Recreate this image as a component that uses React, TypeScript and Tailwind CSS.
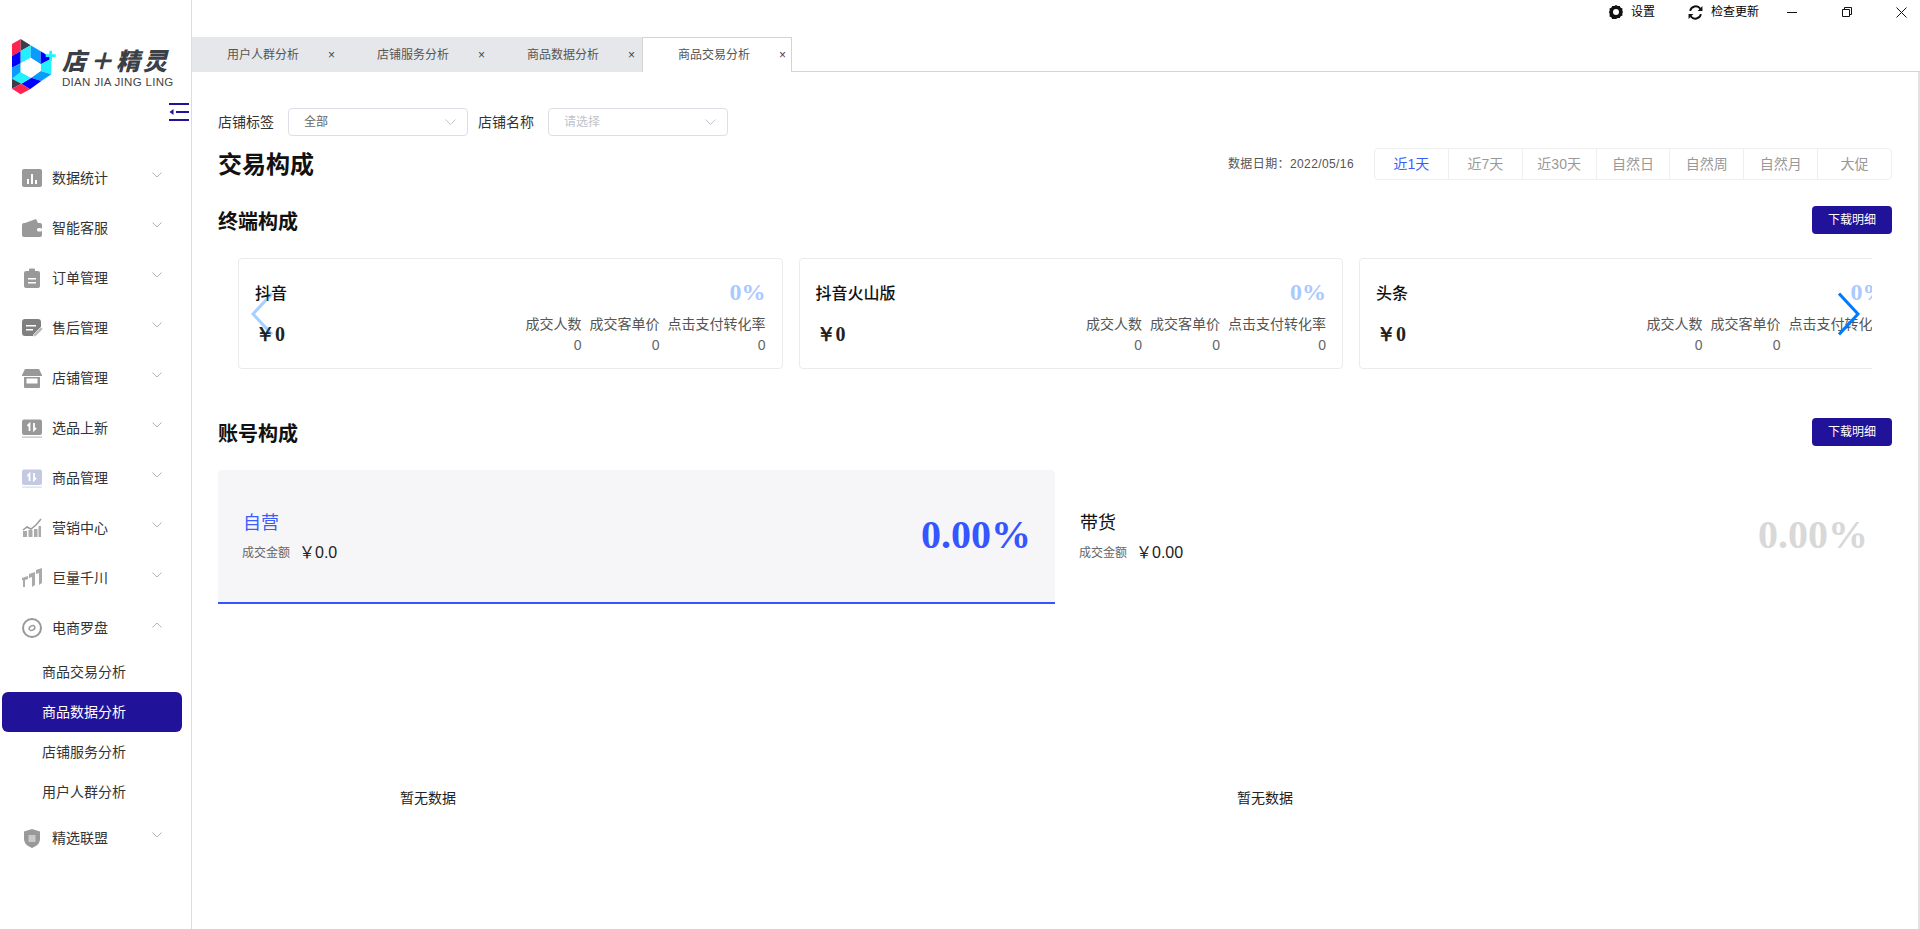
import { ReactNode } from 'react'

const NAVY = '#201399'

function Chevron({ up }: { up?: boolean }) {
    return (
        <svg width="10" height="6" viewBox="0 0 10 6" fill="none" stroke="#b4b4b8" strokeWidth="1" className="mt-[-6px]">
            <path d={up ? 'M0.5 5.5 L5 1 L9.5 5.5' : 'M0.5 0.5 L5 5 L9.5 0.5'} />
        </svg>
    )
}

const icons: Record<string, ReactNode> = {
    stats: (
        <>
            <rect x="0" y="1" width="20" height="18" rx="2" fill="#999" />
            <path d="M5 11h2v5H5zM9 6h2v10H9zM13 12h2v4h-2z" fill="#fff" />
        </>
    ),
    wallet: (
        <>
            <path d="M3 5 L14 1 L16 5z" fill="#999" />
            <rect x="0" y="5" width="20" height="14" rx="2" fill="#999" />
            <rect x="15" y="10" width="5" height="3.5" rx="1.5" fill="#fff" />
        </>
    ),
    clip: (
        <>
            <rect x="2" y="3" width="16" height="17" rx="2" fill="#999" />
            <rect x="7" y="0.5" width="6" height="4" rx="1" fill="#999" />
            <path d="M6 10h8v1.6H6zM6 14h8v1.6H6z" fill="#fff" />
        </>
    ),
    note: (
        <>
            <path d="M3 1h13a3 3 0 0 1 3 3v6l-8 8H3a3 3 0 0 1-3-3V4a3 3 0 0 1 3-3z" fill="#808080" />
            <path d="M4 7h10v1.6H4zM4 11h7v1.6H4z" fill="#fff" />
            <path d="M11 19l1-3 7-7 2 2-7 7z" fill="#bbb" stroke="#fff" strokeWidth="0.6" />
        </>
    ),
    store: (
        <>
            <path d="M3 1h14l3 6v1H0V7z" fill="#999" />
            <path d="M2 9h16v10a1 1 0 0 1-1 1H3a1 1 0 0 1-1-1z" fill="#999" />
            <path d="M4.500 10.500h11v5h-11z" fill="#fff" />
        </>
    ),
    swap: (
        <>
            <rect x="0" y="1.500" width="20" height="15.500" rx="2" fill="#999" />
            <rect x="0" y="18.500" width="20" height="1.200" fill="#bbb" />
            <path d="M7.500 13V6L5.500 8M12 5v7l2-2" stroke="#fff" strokeWidth="1.800" fill="none" />
        </>
    ),
    swapLight: (
        <>
            <rect x="0" y="1.500" width="20" height="15.500" rx="2" fill="#c4c9e2" />
            <rect x="0" y="18.500" width="20" height="1.200" fill="#d6daec" />
            <path d="M7.500 13V6L5.500 8M12 5v7l2-2" stroke="#fff" strokeWidth="1.800" fill="none" />
        </>
    ),
    chart: (
        <>
            <path d="M1 12l4-3 4 2 5-4 5-6" stroke="#999" strokeWidth="1.500" fill="none" />
            <path d="M1 13h4v6H1zM6.500 12h4v7h-4zM12 11h3.500v8H12zM16.500 8H19v11h-2.500z" fill="#aaa" />
        </>
    ),
    steps: (
        <>
            <path d="M0 10l6-2v3l-3 1v7H1v-7l-1 .3z" fill="#aaa" />
            <path d="M7 6l6-2v13l-3 2V9l-3 1z" fill="#aaa" />
            <path d="M14 2l6-2v15l-3 2V5l-3 1z" fill="#aaa" />
        </>
    ),
    compass: (
        <>
            <circle cx="10" cy="10" r="9" fill="none" stroke="#999" strokeWidth="2" />
            <ellipse cx="10" cy="10" rx="3" ry="2.200" fill="none" stroke="#999" strokeWidth="1.400" transform="rotate(-30 10 10)" />
        </>
    ),
    shield: (
        <>
            <path d="M10 1l8 2.500V11c0 4.500-4 7.500-8 9-4-1.500-8-4.500-8-9V3.500z" fill="#999" />
            <rect x="6.500" y="7" width="7" height="7" fill="#c9c9c9" />
        </>
    ),
}

function MenuRow({ icon, label, up }: { icon: string; label: string; up?: boolean }) {
    return (
        <div className="flex h-[50px] items-center pl-[22px]">
            <svg width="20" height="20" viewBox="0 0 20 20" className="shrink-0 overflow-visible">
                {icons[icon]}
            </svg>
            <span className="ml-[10px] w-[100px] text-[14px] text-[#333]">{label}</span>
            <Chevron up={up} />
        </div>
    )
}

function Logo() {
    return (
        <div className="flex h-[103px] items-start pl-[8px] pt-[36px]">
            <svg width="49" height="62" viewBox="0 0 147 186" className="shrink-0">
                <path d="M12 24 L38 9 L38 45 L12 60z" fill="#ff2450" />
                <path d="M38 9 L68 28 L38 45z" fill="#3a3f4b" />
                <path d="M12 60 L38 45 L38 82 L12 95z" fill="#0000ff" />
                <path d="M38 45 L68 28 L68 65 L38 82z" fill="#22f0ff" />
                <path d="M68 28 L98 46 L98 85 L68 65z" fill="#0a9bff" />
                <path d="M98 46 L130 65 L130 68 L98 85z" fill="#0000ff" />
                <path d="M98 85 L130 68 L130 115 L98 105z" fill="#22f0ff" />
                <path d="M70 125 L98 105 L130 115 L100 135z" fill="#0a9bff" />
                <path d="M40 143 L70 125 L100 135 L66 160z" fill="#0000ff" />
                <path d="M12 128 L38 108 L70 125 L40 143z" fill="#22f0ff" />
                <path d="M12 95 L38 82 L38 108 L12 128z" fill="#0a9bff" />
                <path d="M12 128 L40 143 L12 158z" fill="#3a3f4b" />
                <path d="M12 158 L40 143 L66 160 L38 175z" fill="#ff2450" />
                <path d="M68 65 L98 85 L98 105 L68 125 L38 108 L38 82z" fill="#fff" />
                <path d="M124 44h8v11h11v8h-11v11h-8V63h-11v-8h11z" fill="#22f0ff" />
            </svg>
            <div className="ml-[5px] flex flex-col">
                <span className="mt-[13px] h-[26px] whitespace-nowrap text-[24px] font-black italic leading-[26px] tracking-[3px] text-[#3a3f48]">店＋精灵</span>
                <span className="whitespace-nowrap text-[11.5px] leading-[14px] tracking-[0.3px] text-[#444]">DIAN JIA JING LING</span>
            </div>
        </div>
    )
}

function Sidebar() {
    const top = [
        ['stats', '数据统计'],
        ['wallet', '智能客服'],
        ['clip', '订单管理'],
        ['note', '售后管理'],
        ['store', '店铺管理'],
        ['swap', '选品上新'],
        ['swapLight', '商品管理'],
        ['chart', '营销中心'],
        ['steps', '巨量千川'],
    ]
    const subs = ['商品交易分析', '商品数据分析', '店铺服务分析', '用户人群分析']
    return (
        <aside className="flex h-[929px] w-[192px] shrink-0 flex-col border-r border-[#dcdcdc] bg-white">
            <Logo />
            <div className="flex h-[50px] items-start justify-end pr-[2px]">
                <svg width="20" height="18" viewBox="0 0 20 18" fill={NAVY}>
                    <rect x="0" y="0" width="20" height="2" />
                    <rect x="7" y="8" width="13" height="2" />
                    <rect x="0" y="16" width="20" height="2" />
                    <path d="M0.500 9 L4.500 6 V12z" />
                </svg>
            </div>
            {top.map(([icon, label]) => (
                <MenuRow key={label} icon={icon} label={label} />
            ))}
            <MenuRow icon="compass" label="电商罗盘" up />
            <div className="-mt-px flex flex-col">
                {subs.map((s, i) => (
                    <div
                        key={s}
                        className={`ml-[2px] flex h-[40px] w-[180px] items-center rounded-[6px] pl-[40px] text-[14px] ${i === 1 ? 'bg-[#201399] text-white' : 'text-[#333]'}`}
                    >
                        {s}
                    </div>
                ))}
            </div>
            <div className="mt-px">
                <MenuRow icon="shield" label="精选联盟" />
            </div>
        </aside>
    )
}

function TopBar() {
    return (
        <div className="flex h-[37px] items-start justify-end pt-[5px]">
            <div className="flex h-[14px] items-center text-[12px] text-black">
                <svg width="14" height="14" viewBox="0 0 14 14" className="mr-[8px]">
                    <path d="M7 0l1.800 1.100 2-.2.900 1.800 1.800.9-.2 2L14 7l-.7 1.400.2 2-1.800.9-.9 1.800-2-.2L7 14l-1.800-.1-2 .2-.9-1.800-1.800-.9.2-2L0 7l.7-1.400-.2-2 1.800-.9.900-1.800 2 .2z" fill="#111" />
                    <circle cx="7" cy="7" r="3" fill="#fff" />
                </svg>
                <span className="w-[24px]">设置</span>
                <svg width="15" height="15" viewBox="0 0 14 14" fill="none" stroke="#111" strokeWidth="1.800" className="ml-[33px] mr-[8px]">
                    <path d="M2 5.500A5.300 5.300 0 0 1 11.500 3.500" />
                    <path d="M12 8.500A5.300 5.300 0 0 1 2.500 10.500" />
                    <path d="M13.500 1v4.500H9z" fill="#111" stroke="none" />
                    <path d="M.5 13V8.500H5z" fill="#111" stroke="none" />
                </svg>
                <span className="w-[48px]">检查更新</span>
                <svg width="10" height="10" viewBox="0 0 10 10" fill="none" stroke="#111" className="ml-[28px]">
                    <path d="M0 5.500h10" />
                </svg>
                <svg width="10" height="10" viewBox="0 0 10 10" fill="none" stroke="#111" className="ml-[45px]">
                    <path d="M.5 2.500h7v7h-7zM2.500 2.500v-2h7v7h-2" />
                </svg>
                <svg width="11" height="11" viewBox="0 0 11 11" fill="none" stroke="#111" className="ml-[44px] mr-[13px]">
                    <path d="M.5 .5l10 10M10.500 .5l-10 10" />
                </svg>
            </div>
        </div>
    )
}

function Tabs() {
    const tabs = ['用户人群分析', '店铺服务分析', '商品数据分析', '商品交易分析']
    return (
        <div className="flex h-[35px] border-b border-[#d4d4d4]">
            {tabs.map((t, i) => (
                <div
                    key={t}
                    className={`flex h-[35px] w-[150px] items-center pl-[35px] text-[12px] text-[#555] ${i === 3 ? 'border-x border-t border-[#d4d4d4] bg-white' : 'bg-[#e5e7ea]'}`}
                >
                    <span className="w-[72px]">{t}</span>
                    <span className="ml-[29px] text-[12px] text-[#444]">×</span>
                </div>
            ))}
        </div>
    )
}

function Select({ text, muted }: { text: string; muted?: boolean }) {
    return (
        <div className="flex h-[28px] w-[180px] items-center justify-between rounded-[4px] border border-[#dcdfe6] bg-white pl-[15px] pr-[11px]">
            <span className={`text-[12px] ${muted ? 'text-[#c0c4cc]' : 'text-[#666]'}`}>{text}</span>
            <svg width="11" height="7" viewBox="0 0 11 7" fill="none" stroke="#c0c4cc" strokeWidth="1">
                <path d="M.5 .5l5 5 5-5" />
            </svg>
        </div>
    )
}

function DownloadButton() {
    return (
        <button className="flex h-[28px] w-[80px] items-center justify-center rounded-[4px] bg-[#201399] text-[12px] text-white">
            下载明细
        </button>
    )
}

function TerminalCard({ name }: { name: string }) {
    return (
        <div className="flex h-[111px] w-[544.5px] shrink-0 justify-between rounded-[4px] border border-[#eaeaea] bg-white pl-[16px] pr-[16px]">
            <div className="flex flex-col">
                <span className="mt-[24px] h-[22px] whitespace-nowrap text-[16px] font-medium leading-[22px] text-[#111]">{name}</span>
                <span className="mt-[18px] font-['Liberation_Serif',serif] text-[20px] font-bold leading-[22px] text-[#222]">￥0</span>
            </div>
            <div className="flex flex-col items-end">
                <span className="mt-[19px] font-['Liberation_Serif',serif] text-[24px] font-bold leading-[28px] text-[#a9c9ff]">0%</span>
                <div className="mt-[8px] flex gap-[8px] text-[14px] leading-[20px] text-[#555]">
                    <div className="flex flex-col items-end">
                        <span>成交人数</span>
                        <span className="mt-[1px] text-[#666]">0</span>
                    </div>
                    <div className="flex flex-col items-end">
                        <span>成交客单价</span>
                        <span className="mt-[1px] text-[#666]">0</span>
                    </div>
                    <div className="flex flex-col items-end">
                        <span>点击支付转化率</span>
                        <span className="mt-[1px] text-[#666]">0</span>
                    </div>
                </div>
            </div>
        </div>
    )
}

function AccountCard({ name, amount, active }: { name: string; amount: string; active?: boolean }) {
    return (
        <div className={`flex h-[134px] flex-1 justify-between ${active ? 'rounded-t-[4px] border-b-2 border-[#3555ff] bg-[#f6f6f8]' : ''} pl-[25px] pr-[24px]`}>
            <div className="flex flex-col">
                <span className={`mt-[40px] text-[18px] leading-[26px] ${active ? 'text-[#3a5cff]' : 'text-[#111]'}`}>{name}</span>
                <div className="mt-[5px] flex items-center">
                    <span className="ml-[-1px] text-[12px] text-[#666]">成交金额</span>
                    <span className="ml-[9px] text-[16px] text-[#222]">{amount}</span>
                </div>
            </div>
            <span className={`mt-[40px] font-['Liberation_Serif',serif] text-[40px] font-bold leading-[50px] ${active ? 'text-[#3555ff]' : 'text-[#d8d8d8]'}`}>0.00%</span>
        </div>
    )
}

function Empty() {
    return <div className="w-[420px] text-center text-[14px] text-[#222]">暂无数据</div>
}

export default function App() {
    const ranges = ['近1天', '近7天', '近30天', '自然日', '自然周', '自然月', '大促']
    return (
        <div className="flex h-[929px] w-[1920px] overflow-hidden bg-white font-['Liberation_Sans','Noto_Sans_CJK_SC',sans-serif]">
            <Sidebar />
            <main className="flex min-w-0 flex-1 flex-col">
                <TopBar />
                <Tabs />
                <div className="flex-1 border-r-2 border-[#e2e2e2] pl-[26px] pr-[26px] pt-[36px]">
                    <div className="flex h-[28px] items-center text-[14px] text-[#333]">
                        <span>店铺标签</span>
                        <div className="ml-[14px] mr-[10px]">
                            <Select text="全部" />
                        </div>
                        <span>店铺名称</span>
                        <div className="ml-[14px]">
                            <Select text="请选择" muted />
                        </div>
                    </div>

                    <div className="mt-[12px] flex h-[32px] items-center justify-between">
                        <h1 className="pt-[2px] text-[24px] font-bold leading-[32px] text-[#111]">交易构成</h1>
                        <div className="flex items-center">
                            <span className="mr-[20px] text-[12px] tracking-[0.4px] text-[#555]">数据日期：2022/05/16</span>
                            <div className="flex h-[32px] w-[518px] rounded-[4px] border border-[#eeeeee]">
                                {ranges.map((r, i) => (
                                    <div
                                        key={r}
                                        className={`flex flex-1 items-center justify-center text-[14px] ${i > 0 ? 'border-l border-[#eeeeee]' : ''} ${i === 0 ? 'text-[#3a5cff]' : 'text-[#999]'}`}
                                    >
                                        {r}
                                    </div>
                                ))}
                            </div>
                        </div>
                    </div>

                    <div className="mt-[26px] flex h-[28px] items-center justify-between">
                        <h2 className="pt-[3px] text-[20px] font-bold text-[#111]">终端构成</h2>
                        <DownloadButton />
                    </div>

                    <div className="relative mt-[24px] w-[1654px] overflow-hidden">
                        <div className="flex gap-[16px] pl-[20px]">
                            <TerminalCard name="抖音" />
                            <TerminalCard name="抖音火山版" />
                            <TerminalCard name="头条" />
                        </div>
                        <svg width="22" height="44" viewBox="0 0 22 44" fill="none" stroke="#007aff" strokeWidth="3" className="absolute left-[33px] top-[34px] opacity-35">
                            <path d="M21 1.500 L2 22 L21 42.500" />
                        </svg>
                        <svg width="22" height="44" viewBox="0 0 22 44" fill="none" stroke="#007aff" strokeWidth="3" className="absolute left-[1620px] top-[34px]">
                            <path d="M1 1.500 L20 22 L1 42.500" />
                        </svg>
                    </div>

                    <div className="mt-[49px] flex h-[28px] items-center justify-between">
                        <h2 className="pt-[3px] text-[20px] font-bold text-[#111]">账号构成</h2>
                        <DownloadButton />
                    </div>

                    <div className="mt-[24px] flex">
                        <AccountCard name="自营" amount="￥0.0" active />
                        <AccountCard name="带货" amount="￥0.00" />
                    </div>

                    <div className="mt-[184px] grid grid-cols-2">
                        <Empty />
                        <Empty />
                    </div>
                </div>
            </main>
        </div>
    )
}
